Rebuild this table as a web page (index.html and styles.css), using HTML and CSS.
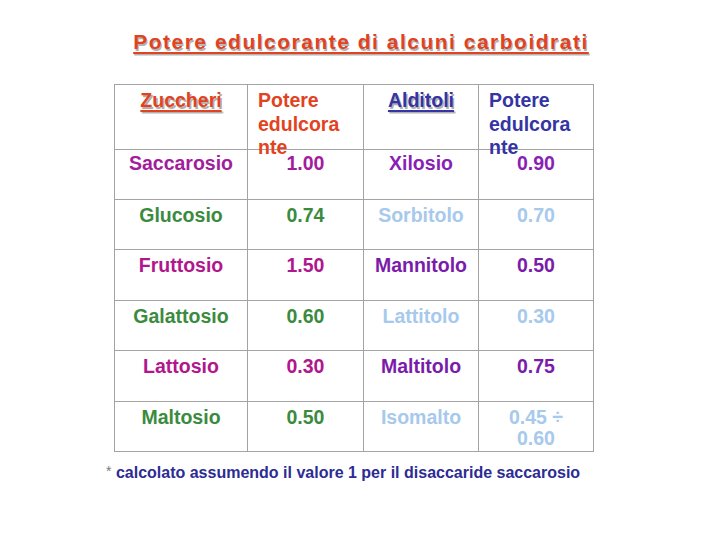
FILE: index.html
```html
<!DOCTYPE html>
<html lang="it">
<head>
<meta charset="utf-8">
<title>Potere edulcorante</title>
<link rel="stylesheet" href="styles.css">
</head>
<body>
<div class="slide">
  <h1 class="title">Potere edulcorante di alcuni carboidrati</h1>
  <div class="table">
    <div class="cell head center"><span class="u red">Zuccheri</span></div>
    <div class="cell head left red">Potere<br>edulcora<br>nte</div>
    <div class="cell head center"><span class="u blue">Alditoli</span></div>
    <div class="cell head left blue">Potere<br>edulcora<br>nte</div>

    <div class="cell first mag">Saccarosio</div>
    <div class="cell first mag">1.00</div>
    <div class="cell first vio">Xilosio</div>
    <div class="cell first vio">0.90</div>

    <div class="cell grn">Glucosio</div>
    <div class="cell grn">0.74</div>
    <div class="cell lb">Sorbitolo</div>
    <div class="cell lb">0.70</div>

    <div class="cell pink">Fruttosio</div>
    <div class="cell pink">1.50</div>
    <div class="cell pur">Mannitolo</div>
    <div class="cell pur">0.50</div>

    <div class="cell grn">Galattosio</div>
    <div class="cell grn">0.60</div>
    <div class="cell lb">Lattitolo</div>
    <div class="cell lb">0.30</div>

    <div class="cell pink">Lattosio</div>
    <div class="cell pink">0.30</div>
    <div class="cell pur">Maltitolo</div>
    <div class="cell pur">0.75</div>

    <div class="cell grn">Maltosio</div>
    <div class="cell grn">0.50</div>
    <div class="cell lb">Isomalto</div>
    <div class="cell lb">0.45 ÷<br>0.60</div>
  </div>
  <p class="note"><span class="star">*</span> calcolato assumendo il valore 1 per il disaccaride saccarosio</p>
</div>
</body>
</html>
```

FILE: styles.css
```css
html, body {
  margin: 0;
  padding: 0;
  background: #ffffff;
}

.slide {
  width: 720px;
  height: 540px;
  font-family: "Liberation Sans", Arial, sans-serif;
  font-weight: bold;
  overflow: hidden;
}

.title {
  margin: 29px 0 0 0;
  padding-left: 2px;
  font-size: 21px;
  line-height: 25px;
  letter-spacing: 1.5px;
  text-align: center;
  color: #e2421e;
  text-decoration: underline;
  text-decoration-thickness: 2px;
  text-underline-offset: 3px;
  text-shadow: 1px 1.5px 0 #b4b4b4;
}

.table {
  margin: 30px 0 0 114px;
  display: grid;
  grid-template-columns: 133px 116px 115px 115px;
  grid-template-rows: 65px 50px 50px 51px 50px 51px 50px;
  width: max-content;
  border-left: 1px solid #a3a3a3;
  border-top: 1px solid #a3a3a3;
}

.cell {
  box-sizing: border-box;
  border-right: 1px solid #a3a3a3;
  border-bottom: 1px solid #a3a3a3;
  font-size: 19.5px;
  line-height: 21px;
  padding: 5px 2px 0 2px;
  text-align: center;
  white-space: nowrap;
}

.first {
  padding-top: 3px;
}

.head {
  line-height: 23.5px;
  padding-top: 4px;
}

.center { text-align: center; }
.left { text-align: left; padding-left: 10px; }

.u {
  text-decoration: underline;
  text-decoration-thickness: 2px;
  text-underline-offset: 3px;
  text-shadow: 1.5px 1.5px 0 #b0b0b0;
}

.red { color: #e2421e; }
.blue { color: #3434a4; }
.mag { color: #a31c9c; }
.vio { color: #8a1fb6; }
.grn { color: #3b8b3f; }
.lb { color: #a6c9ec; }
.pink { color: #b0178d; }
.pur { color: #7a1ca9; }

.note {
  margin: 10px 0 0 106px;
  font-size: 16px;
  line-height: 19px;
  color: #2c2c94;
}

.star {
  color: #7a7a7a;
  font-weight: normal;
  font-size: 14px;
  vertical-align: 2px;
}
```
